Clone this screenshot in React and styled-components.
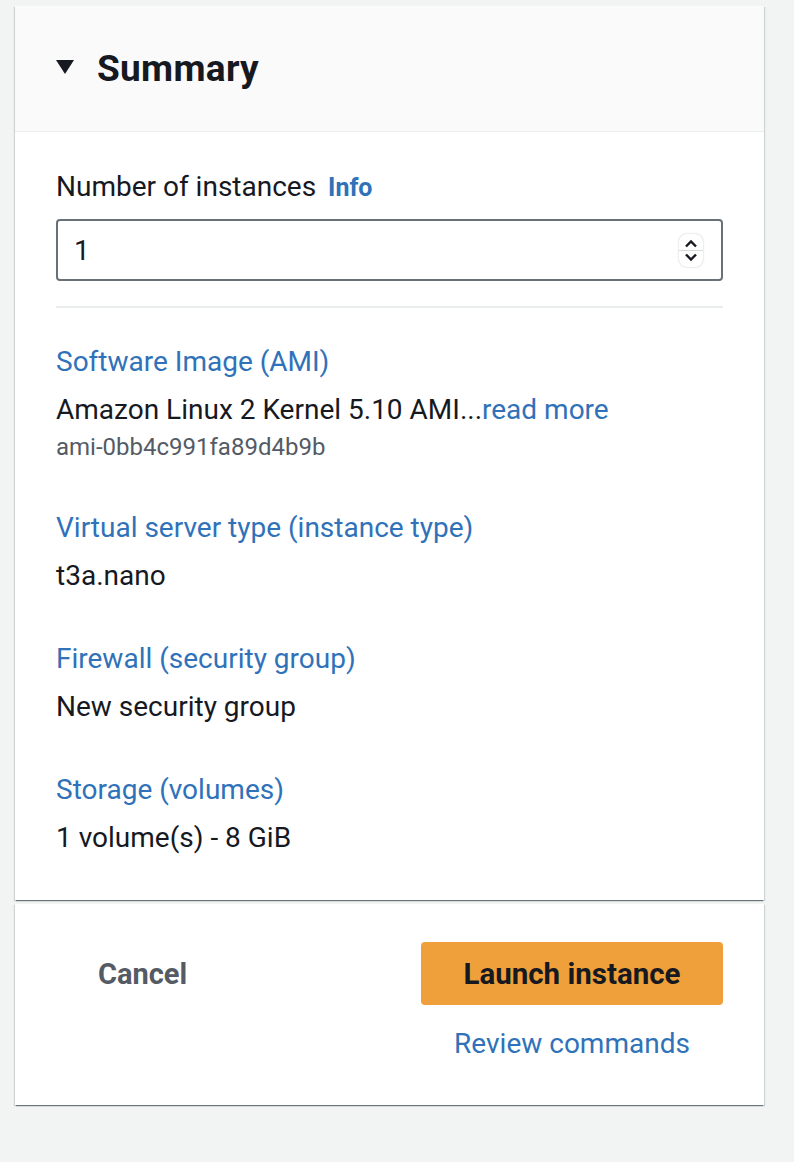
import React, { useState } from 'react';
import styled, { createGlobalStyle } from 'styled-components';

const GlobalStyle = createGlobalStyle`
  body {
    margin: 0;
    background: #f2f3f3;
    font-family: Roboto, "Liberation Sans", sans-serif;
    color: #16191f;
  }
`;

const details = [
  { label: 'Software Image (AMI)', value: 'Amazon Linux 2 Kernel 5.10 AMI...', more: true, sub: 'ami-0bb4c991fa89d4b9b' },
  { label: 'Virtual server type (instance type)', value: 't3a.nano' },
  { label: 'Firewall (security group)', value: 'New security group' },
  { label: 'Storage (volumes)', value: '1 volume(s) - 8 GiB' },
];

const App = () => {
  const [count, setCount] = useState('1')

  return (
    <Page>
      <GlobalStyle />
      <Card>
        <Header>
          <Caret viewBox="0 0 18 14">
            <path d="M0 0 H18 L9 14 Z" fill="#16191f" />
          </Caret>
          <Title>Summary</Title>
        </Header>
        <Body>
          <Label>
            Number of instances <Info>Info</Info>
          </Label>
          <InputWrap>
            <NumberInput value={count} onChange={(e) => setCount(e.target.value)} />
            <Spinner>
              <svg width="14" height="10" viewBox="0 0 14 10">
                <path d="M2 7.5 L7 2.5 L12 7.5" stroke="#16191f" strokeWidth="2.4" fill="none" />
              </svg>
              <SpinDivider />
              <svg width="14" height="10" viewBox="0 0 14 10">
                <path d="M2 2.5 L7 7.5 L12 2.5" stroke="#16191f" strokeWidth="2.4" fill="none" />
              </svg>
            </Spinner>
          </InputWrap>
          <Divider />
          <DetailList>
            {details.map((d) => (
              <Detail key={d.label}>
                <Link>{d.label}</Link>
                <Value>
                  {d.value}
                  {d.more && <Link>read more</Link>}
                </Value>
                {d.sub && <Sub>{d.sub}</Sub>}
              </Detail>
            ))}
          </DetailList>
        </Body>
      </Card>
      <Card>
        <Footer>
          <Cancel>Cancel</Cancel>
          <ActionCol>
            <Launch>Launch instance</Launch>
            <Review>Review commands</Review>
          </ActionCol>
        </Footer>
      </Card>
    </Page>
  )
}

const Page = styled.div`
  width: 749px;
  padding: 6px 0 57px 15px;
  display: flex;
  flex-direction: column;
  gap: 4px;
`;

const Card = styled.div`
  background: #ffffff;
  box-shadow: 0 2px 1px -1px rgba(0, 28, 36, 0.4), 1px 1px 1px 0 rgba(0, 28, 36, 0.15), -1px 1px 1px 0 rgba(0, 28, 36, 0.15);
`;

const Header = styled.div`
  height: 126px;
  background: #fafafa;
  border-bottom: 1px solid #eaeded;
  display: flex;
  align-items: center;
  gap: 23px;
  padding-left: 41px;
  box-sizing: border-box;
`;

const Caret = styled.svg`
  width: 18px;
  height: 14px;
  margin-top: -4px;
`;

const Title = styled.h2`
  margin: 0;
  font-size: 37px;
  font-weight: 700;
  color: #16191f;
  letter-spacing: 0.3px;
`;

const Body = styled.div`
  padding: 39px 41px 46px 41px;
`;

const Label = styled.div`
  font-size: 28px;
  line-height: 32px;
  color: #16191f;
`;

const Info = styled.span`
  font-size: 25px;
  font-weight: 700;
  color: #3072b9;
  margin-left: 5px;
`;

const InputWrap = styled.div`
  position: relative;
  margin-top: 15px;
`;

const NumberInput = styled.input`
  width: 100%;
  height: 62px;
  box-sizing: border-box;
  border: 2px solid #687078;
  border-radius: 4px;
  padding: 0 16px;
  font-family: Roboto, "Liberation Sans", sans-serif;
  font-size: 28px;
  color: #16191f;
  outline: none;
`;

const Spinner = styled.div`
  position: absolute;
  right: 20px;
  top: 15px;
  width: 24px;
  height: 33px;
  border-radius: 8px;
  box-shadow: 0 0 2px rgba(0, 0, 0, 0.25);
  background: #fff;
  display: flex;
  flex-direction: column;
  align-items: center;
  justify-content: center;
`;

const SpinDivider = styled.div`
  width: 100%;
  height: 1px;
  background: #d5dbdb;
  margin: 1px 0;
`;

const Divider = styled.div`
  height: 2px;
  background: #eaeded;
  margin-top: 25px;
`;

const DetailList = styled.div`
  display: flex;
  flex-direction: column;
  gap: 51px;
  margin-top: 38px;
`;

const Detail = styled.div`
  display: flex;
  flex-direction: column;
`;

const Link = styled.span`
  color: #3072b9;
  font-size: 28px;
  line-height: 32px;
`;

const Value = styled.div`
  font-size: 28px;
  line-height: 32px;
  color: #16191f;
  margin-top: 16px;
`;

const Sub = styled.div`
  font-size: 24px;
  line-height: 28px;
  color: #545b64;
  margin-top: 7px;
`;

const Footer = styled.div`
  height: 201px;
  display: flex;
  justify-content: space-between;
  align-items: flex-start;
  padding: 38px 41px 0 41px;
  box-sizing: border-box;
`;

const Cancel = styled.button`
  height: 63px;
  padding: 0 42px;
  background: none;
  border: none;
  font-family: Roboto, "Liberation Sans", sans-serif;
  font-size: 29px;
  font-weight: 700;
  color: #545b64;
  cursor: pointer;
`;

const ActionCol = styled.div`
  width: 302px;
  display: flex;
  flex-direction: column;
  align-items: center;
  gap: 23px;
`;

const Launch = styled.button`
  width: 100%;
  height: 63px;
  background: #f0a03a;
  border: none;
  border-radius: 4px;
  font-family: Roboto, "Liberation Sans", sans-serif;
  font-size: 29.5px;
  font-weight: 700;
  color: #16191f;
  cursor: pointer;
`;

const Review = styled.span`
  color: #3072b9;
  font-size: 28px;
  line-height: 32px;
`;

export default App;
